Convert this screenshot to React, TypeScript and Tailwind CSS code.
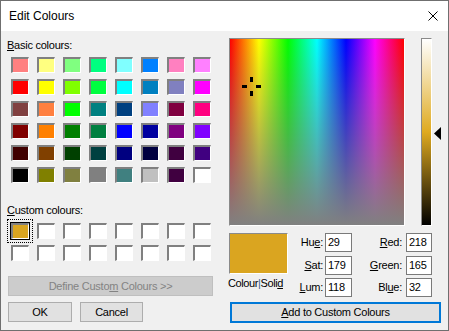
import React from 'react';

const basicColours: string[][] = [
  ['bg-[#ff8080]', 'bg-[#ffff80]', 'bg-[#80ff80]', 'bg-[#00ff80]', 'bg-[#80ffff]', 'bg-[#0080ff]', 'bg-[#ff80c0]', 'bg-[#ff80ff]'],
  ['bg-[#ff0000]', 'bg-[#ffff00]', 'bg-[#80ff00]', 'bg-[#00ff40]', 'bg-[#00ffff]', 'bg-[#0080c0]', 'bg-[#8080c0]', 'bg-[#ff00ff]'],
  ['bg-[#804040]', 'bg-[#ff8040]', 'bg-[#00ff00]', 'bg-[#008080]', 'bg-[#004080]', 'bg-[#8080ff]', 'bg-[#800040]', 'bg-[#ff0080]'],
  ['bg-[#800000]', 'bg-[#ff8000]', 'bg-[#008000]', 'bg-[#008040]', 'bg-[#0000ff]', 'bg-[#0000a0]', 'bg-[#800080]', 'bg-[#8000ff]'],
  ['bg-[#400000]', 'bg-[#804000]', 'bg-[#004000]', 'bg-[#004040]', 'bg-[#000080]', 'bg-[#000040]', 'bg-[#400040]', 'bg-[#400080]'],
  ['bg-[#000000]', 'bg-[#808000]', 'bg-[#808040]', 'bg-[#808080]', 'bg-[#408080]', 'bg-[#c0c0c0]', 'bg-[#400040]', 'bg-[#ffffff]'],
];

const customColours: string[] = [
  'bg-[#daa520]', 'bg-white', 'bg-white', 'bg-white', 'bg-white', 'bg-white', 'bg-white', 'bg-white',
  'bg-white', 'bg-white', 'bg-white', 'bg-white', 'bg-white', 'bg-white', 'bg-white', 'bg-white',
];

// cuadrito hundido estilo win32
const Swatch = ({ colour, selected }: { colour: string; selected?: boolean }) => (
  <div
    className={
      'w-[18px] h-[16px] border-t-2 border-l-2 border-r border-b border-t-[#808080] border-l-[#808080] border-r-white border-b-white ' +
      colour +
      (selected ? ' outline-1 outline-dotted outline-black outline-offset-[3px] shadow-[0_0_0_1px_#000]' : '')
    }
  />
);

interface Campo {
  label: React.ReactNode;
  value: string;
}

const hsl: Campo[] = [
  { label: <>Hu<span className="underline">e</span>:</>, value: '29' },
  { label: <><span className="underline">S</span>at:</>, value: '179' },
  { label: <><span className="underline">L</span>um:</>, value: '118' },
];

const rgb: Campo[] = [
  { label: <><span className="underline">R</span>ed:</>, value: '218' },
  { label: <><span className="underline">G</span>reen:</>, value: '165' },
  { label: <>Bl<span className="underline">u</span>e:</>, value: '32' },
];

export default function App() {
  return (
    <div className="w-[449px] h-[331px] border border-[#6f6f6f] bg-[#f0f0f0] flex flex-col overflow-hidden text-black font-['Liberation_Sans',Arial,sans-serif]">
      {/* barra de título */}
      <div className="h-[30px] shrink-0 bg-white flex items-center justify-between pl-[8px] pr-[10px]">
        <span className="text-[12px]">Edit Colours</span>
        <svg width="10" height="10" viewBox="0 0 10 10">
          <path d="M0.5 0.5 L9.5 9.5 M9.5 0.5 L0.5 9.5" stroke="#000" strokeWidth="1" />
        </svg>
      </div>

      <div className="flex pt-[7px] pl-[6px] text-[11px] tracking-[-0.25px]">
        {/* columna izquierda */}
        <div className="w-[206px] mt-[1px] flex flex-col">
          <div className="h-[13px] leading-[13px]">
            <span className="underline">B</span>asic colours:
          </div>
          <div className="mt-[5px] ml-[4px] grid grid-cols-[repeat(8,18px)] gap-x-[8px] gap-y-[6px]">
            {basicColours.flat().map((c, i) => (
              <Swatch key={i} colour={c} />
            ))}
          </div>

          <div className="mt-[21px] h-[13px] leading-[13px]">
            <span className="underline">C</span>ustom colours:
          </div>
          <div className="mt-[6px] ml-[4px] grid grid-cols-[repeat(8,18px)] gap-x-[8px] gap-y-[6px]">
            {customColours.map((c, i) => (
              <Swatch key={i} colour={c} selected={i === 0} />
            ))}
          </div>

          <button className="mt-[15px] ml-[1px] w-[205px] h-[20px] border border-[#bfbfbf] bg-[#cccccc] text-[#838383] flex items-center justify-center">
            <span>
              Define Custo<span className="underline">m</span> Colours &gt;&gt;
            </span>
          </button>

          <div className="mt-[6px] ml-[1px] flex gap-[8px]">
            <button className="w-[64px] h-[20px] border border-[#adadad] bg-[#e1e1e1] flex items-center justify-center">OK</button>
            <button className="w-[63px] h-[20px] border border-[#adadad] bg-[#e1e1e1] flex items-center justify-center">Cancel</button>
          </div>
        </div>

        {/* columna derecha */}
        <div className="ml-[16px] w-[212px] flex flex-col">
          <div className="flex">
            <div className="relative w-[176px] h-[188px] border border-t-[#8a8a8a] border-l-[#8a8a8a] border-r-white border-b-white bg-[linear-gradient(to_bottom,#80808000,#808080),linear-gradient(to_right,#ff0000,#ffff00,#00ff00,#00ffff,#0000ff,#ff00ff,#ff0000)]">
              <svg className="absolute left-[12px] top-[38px]" width="19" height="19" viewBox="0 0 19 19">
                <rect x="8" y="0" width="3" height="5" fill="#000" />
                <rect x="8" y="14" width="3" height="5" fill="#000" />
                <rect x="0" y="8" width="5" height="3" fill="#000" />
                <rect x="14" y="8" width="5" height="3" fill="#000" />
              </svg>
            </div>
            <div className="ml-[16px] w-[11px] h-[188px] border border-t-[#8a8a8a] border-l-[#8a8a8a] border-r-white border-b-white bg-[linear-gradient(to_bottom,#ffffff,#dfaa20,#000000)]" />
            <svg className="ml-[2px] mt-[89px]" width="7" height="13" viewBox="0 0 7 13">
              <polygon points="7,0 0,6.5 7,13" fill="#000" />
            </svg>
          </div>

          <div className="mt-[7px] flex">
            <div className="w-[59px] flex flex-col">
              <div className="w-[59px] h-[41px] border border-t-[#8a8a8a] border-l-[#8a8a8a] border-r-white border-b-white bg-[#daa520]" />
              <div className="mt-[3px] -ml-[1px] h-[13px] leading-[13px] whitespace-nowrap tracking-[-0.4px]">
                Colour<span className="text-[#3b5f8f]">|</span>Soli<span className="underline">d</span>
              </div>
            </div>

            <div className="flex flex-col gap-[3.5px]">
              {hsl.map((h, i) => (
                <div key={i} className="flex items-center h-[19px]">
                  <div className="w-[35px] text-right whitespace-nowrap">{h.label}</div>
                  <div className="ml-[2px] w-[27px] h-[19px] border border-[#7a7a7a] bg-white pl-[2px] flex items-center">{h.value}</div>
                  <div className="w-[50px] text-right whitespace-nowrap">{rgb[i].label}</div>
                  <div className="ml-[4px] w-[26px] h-[19px] border border-[#7a7a7a] bg-white pl-[2px] flex items-center">{rgb[i].value}</div>
                </div>
              ))}
            </div>
          </div>

          <button className="mt-[5px] ml-[1px] w-[211px] h-[21px] border-2 border-[#0078d7] bg-[#e1e1e1] flex items-center justify-center">
            <span>
              <span className="underline">A</span>dd to Custom Colours
            </span>
          </button>
        </div>
      </div>
    </div>
  );
}
